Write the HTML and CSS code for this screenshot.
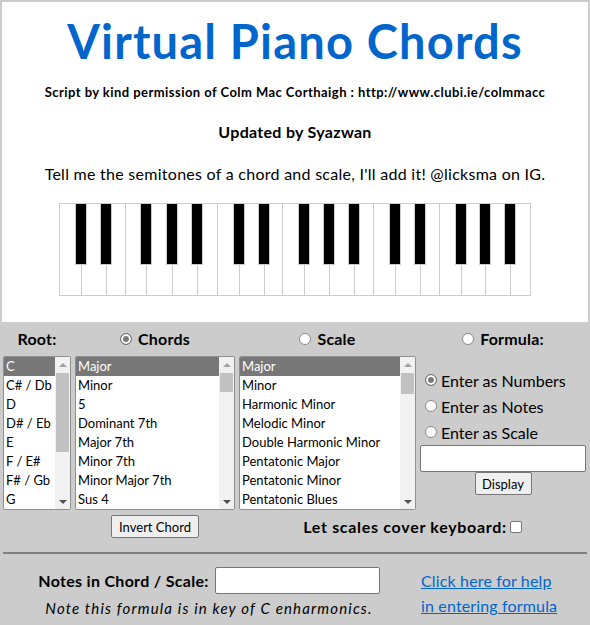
FILE: index.html
```html
<!DOCTYPE html>
<html lang="en">
<head>
<meta charset="utf-8">
<title>Virtual Piano Chords</title>
<link rel="stylesheet" href="styles.css">
</head>
<body>
<div class="panel">
  <h1 class="title">Virtual Piano Chords</h1>
  <p class="credit">Script by kind permission of Colm Mac Corthaigh : http://www.clubi.ie/colmmacc</p>
  <p class="updated">Updated by Syazwan</p>
  <p class="note">Tell me the semitones of a chord and scale, I'll add it! @licksma on IG.</p>
  <svg class="keyboard" width="472" height="93" viewBox="0 0 472 93">
    <rect x="0.5" y="0.5" width="471" height="92" fill="#fff" stroke="#ccc"/>
    <g stroke="#ccc">
      <line x1="66.5" y1="0" x2="66.5" y2="93"/>
      <line x1="158.5" y1="0" x2="158.5" y2="93"/>
      <line x1="223.5" y1="0" x2="223.5" y2="93"/>
      <line x1="314.5" y1="0" x2="314.5" y2="93"/>
      <line x1="380.5" y1="0" x2="380.5" y2="93"/>
      <line x1="22.5" y1="0" x2="22.5" y2="93"/>
      <line x1="47.5" y1="0" x2="47.5" y2="93"/>
      <line x1="87.5" y1="0" x2="87.5" y2="93"/>
      <line x1="113.5" y1="0" x2="113.5" y2="93"/>
      <line x1="138.5" y1="0" x2="138.5" y2="93"/>
      <line x1="180.5" y1="0" x2="180.5" y2="93"/>
      <line x1="205.5" y1="0" x2="205.5" y2="93"/>
      <line x1="245.5" y1="0" x2="245.5" y2="93"/>
      <line x1="270.5" y1="0" x2="270.5" y2="93"/>
      <line x1="295.5" y1="0" x2="295.5" y2="93"/>
      <line x1="336.5" y1="0" x2="336.5" y2="93"/>
      <line x1="361.5" y1="0" x2="361.5" y2="93"/>
      <line x1="402.5" y1="0" x2="402.5" y2="93"/>
      <line x1="426.5" y1="0" x2="426.5" y2="93"/>
      <line x1="451.5" y1="0" x2="451.5" y2="93"/>
    </g>
    <g fill="#000" stroke="#ccc">
      <rect x="16.5" y="0.5" width="11" height="61"/>
      <rect x="41.5" y="0.5" width="11" height="61"/>
      <rect x="81.5" y="0.5" width="11" height="61"/>
      <rect x="107.5" y="0.5" width="11" height="61"/>
      <rect x="132.5" y="0.5" width="11" height="61"/>
      <rect x="174.5" y="0.5" width="11" height="61"/>
      <rect x="199.5" y="0.5" width="11" height="61"/>
      <rect x="239.5" y="0.5" width="11" height="61"/>
      <rect x="264.5" y="0.5" width="11" height="61"/>
      <rect x="289.5" y="0.5" width="11" height="61"/>
      <rect x="330.5" y="0.5" width="11" height="61"/>
      <rect x="355.5" y="0.5" width="11" height="61"/>
      <rect x="396.5" y="0.5" width="11" height="61"/>
      <rect x="420.5" y="0.5" width="11" height="61"/>
      <rect x="445.5" y="0.5" width="11" height="61"/>
    </g>
  </svg>
</div>

<div class="controls">
  <div class="head">Root:</div>
  <label class="head"><input class="radio" type="radio" name="mode" checked>Chords</label>
  <label class="head"><input class="radio" type="radio" name="mode">Scale</label>
  <label class="head"><input class="radio" type="radio" name="mode">Formula:</label>

  <div class="listbox">
    <ul class="options">
      <li class="sel">C</li>
      <li>C# / Db</li>
      <li>D</li>
      <li>D# / Eb</li>
      <li>E</li>
      <li>F / E#</li>
      <li>F# / Gb</li>
      <li>G</li>
    </ul>
    <div class="scrollbar">
      <div class="arrow up"></div>
      <div class="track"><div class="thumb thumb-root"></div></div>
      <div class="arrow down"></div>
    </div>
  </div>

  <div class="listbox">
    <ul class="options">
      <li class="sel">Major</li>
      <li>Minor</li>
      <li>5</li>
      <li>Dominant 7th</li>
      <li>Major 7th</li>
      <li>Minor 7th</li>
      <li>Minor Major 7th</li>
      <li>Sus 4</li>
    </ul>
    <div class="scrollbar">
      <div class="arrow up"></div>
      <div class="track"><div class="thumb thumb-chord"></div></div>
      <div class="arrow down"></div>
    </div>
  </div>

  <div class="listbox">
    <ul class="options">
      <li class="sel">Major</li>
      <li>Minor</li>
      <li>Harmonic Minor</li>
      <li>Melodic Minor</li>
      <li>Double Harmonic Minor</li>
      <li>Pentatonic Major</li>
      <li>Pentatonic Minor</li>
      <li>Pentatonic Blues</li>
    </ul>
    <div class="scrollbar">
      <div class="arrow up"></div>
      <div class="track"><div class="thumb thumb-scale"></div></div>
      <div class="arrow down"></div>
    </div>
  </div>

  <div class="formula">
    <label class="opt"><input class="radio" type="radio" name="entry" checked>Enter as Numbers</label>
    <label class="opt"><input class="radio" type="radio" name="entry">Enter as Notes</label>
    <label class="opt"><input class="radio" type="radio" name="entry">Enter as Scale</label>
    <input class="field field-formula" type="text">
    <button class="btn display-btn" type="button">Display</button>
  </div>

  <div class="invert"><button class="btn" type="button">Invert Chord</button></div>
  <label class="cover">Let scales cover keyboard:<input class="check" type="checkbox"></label>
</div>

<div class="rule"></div>

<div class="help">
  <div class="notes">
    <div class="entry">
      <label class="entry-label" for="notes">Notes in Chord / Scale:</label>
      <input class="field field-notes" id="notes" type="text">
    </div>
    <p class="key-note">Note this formula is in key of C enharmonics.</p>
  </div>
  <div class="links">
    <a href="#help">Click here for help<br>in entering formula</a>
  </div>
</div>
</body>
</html>
```
FILE: styles.css
```css
* {
  box-sizing: border-box;
}

html, body {
  margin: 0;
  padding: 0;
}

body {
  width: 590px;
  height: 625px;
  overflow: hidden;
  background: #cccccc;
  color: #000;
  font-family: Lato, "DejaVu Sans", sans-serif;
}

/* ---------- top white panel ---------- */
.panel {
  margin: 2px 2px 0;
  height: 320px;
  background: #fff;
  padding-top: 11px;
  text-align: center;
}

.title {
  margin: 0;
  font-size: 47px;
  line-height: 56px;
  font-weight: 700;
  letter-spacing: 1.2px;
  color: #0066cc;
}

.credit {
  margin: 15px 0 0;
  font-size: 13px;
  line-height: 16px;
  font-weight: 700;
  letter-spacing: 0.45px;
}

.updated {
  margin: 22px 0 0;
  font-size: 16px;
  line-height: 20px;
  font-weight: 700;
  letter-spacing: 0.3px;
}

.note {
  margin: 22px 0 0;
  font-size: 16px;
  line-height: 20px;
  letter-spacing: 0.27px;
}

.keyboard {
  display: block;
  margin: 19px auto 0;
}

/* ---------- controls ---------- */
.controls {
  display: grid;
  grid-template-columns: 68px 160px 177px 166px;
  column-gap: 4px;
  padding: 7px 3px 0;
}

.head {
  display: flex;
  justify-content: center;
  align-items: center;
  gap: 6px;
  height: 20px;
  line-height: 20px;
  margin-bottom: 7px;
  font-size: 16px;
  font-weight: 700;
  letter-spacing: 0.2px;
}

.radio {
  appearance: none;
  -webkit-appearance: none;
  width: 12px;
  height: 12px;
  margin: 0;
  border: 1px solid #8a8a8a;
  border-radius: 50%;
  background: #fff;
  flex: none;
}

.radio:checked {
  border-color: #767676;
  background: #7a7a7a;
  box-shadow: inset 0 0 0 2px #fff;
}

.listbox {
  display: flex;
  height: 154px;
  border: 1px solid #8f8f8f;
  border-radius: 2px;
  background: #fff;
  overflow: hidden;
}

.options {
  flex: 1;
  min-width: 0;
  margin: 0;
  padding: 0;
  list-style: none;
  font-size: 13px;
}

.options li {
  height: 19px;
  line-height: 19px;
  padding-left: 2px;
  white-space: nowrap;
  overflow: hidden;
}

.options li.sel {
  background: #777777;
  color: #fff;
}

.scrollbar {
  width: 15px;
  flex: none;
  display: flex;
  flex-direction: column;
  background: #f1f1f1;
}

.arrow {
  height: 15px;
  display: flex;
  align-items: center;
  justify-content: center;
}

.arrow::before {
  content: "";
  width: 0;
  height: 0;
  border-left: 4px solid transparent;
  border-right: 4px solid transparent;
}

.arrow.up::before {
  border-bottom: 4px solid #a3a3a3;
}

.arrow.down::before {
  border-top: 4px solid #505050;
}

.track {
  flex: 1;
}

.thumb {
  margin: 1px 1px 0;
  background: #c1c1c1;
}

.thumb-root { height: 79px; }
.thumb-chord { height: 19px; }
.thumb-scale { height: 21px; }

.formula {
  display: flex;
  flex-direction: column;
  padding-top: 11px;
}

.opt {
  display: flex;
  align-items: center;
  gap: 4px;
  height: 26px;
  padding-left: 5px;
  font-size: 16px;
}

.field {
  height: 27px;
  border: 1px solid #767676;
  border-radius: 2px;
  background: #fff;
  padding: 1px 2px;
  font: 13px Lato, "DejaVu Sans", sans-serif;
}

.field-formula {
  width: 166px;
}

.btn {
  height: 23px;
  padding: 0 7px;
  border: 1px solid #767676;
  border-radius: 2px;
  background: #efefef;
  color: #000;
  font: 13px Lato, "DejaVu Sans", sans-serif;
}

.display-btn {
  align-self: center;
  width: 57px;
  padding: 0;
}

.invert {
  grid-column: 2;
  display: flex;
  justify-content: center;
  margin-top: 5px;
}

.invert .btn {
  width: 88px;
  padding: 0;
}

.cover {
  grid-column: 3 / span 2;
  display: flex;
  justify-content: center;
  align-items: center;
  gap: 3px;
  margin-top: 5px;
  font-size: 16px;
  font-weight: 700;
  letter-spacing: 0.7px;
}

.check {
  appearance: none;
  -webkit-appearance: none;
  width: 12px;
  height: 12px;
  margin: 0;
  border: 1px solid #767676;
  border-radius: 2px;
  background: #fff;
}

/* ---------- bottom ---------- */
.rule {
  margin: 14px 3px 0;
  height: 2px;
  background: #808080;
}

.help {
  display: grid;
  grid-template-columns: 412px 1fr;
  column-gap: 6px;
  padding: 13px 3px 0;
}

.entry {
  display: flex;
  justify-content: center;
  align-items: center;
  gap: 6px;
  height: 27px;
}

.entry-label {
  font-size: 16px;
  font-weight: 700;
  letter-spacing: 0.3px;
}

.field-notes {
  width: 165px;
}

.key-note {
  margin: 4px 0 0;
  text-align: center;
  font-size: 15px;
  line-height: 20px;
  font-style: italic;
  letter-spacing: 1.15px;
}

.links {
  padding-top: 1px;
  font-size: 16px;
  line-height: 25px;
  letter-spacing: 0.15px;
}

.links a {
  color: #0066cc;
  text-decoration: underline;
}
```
